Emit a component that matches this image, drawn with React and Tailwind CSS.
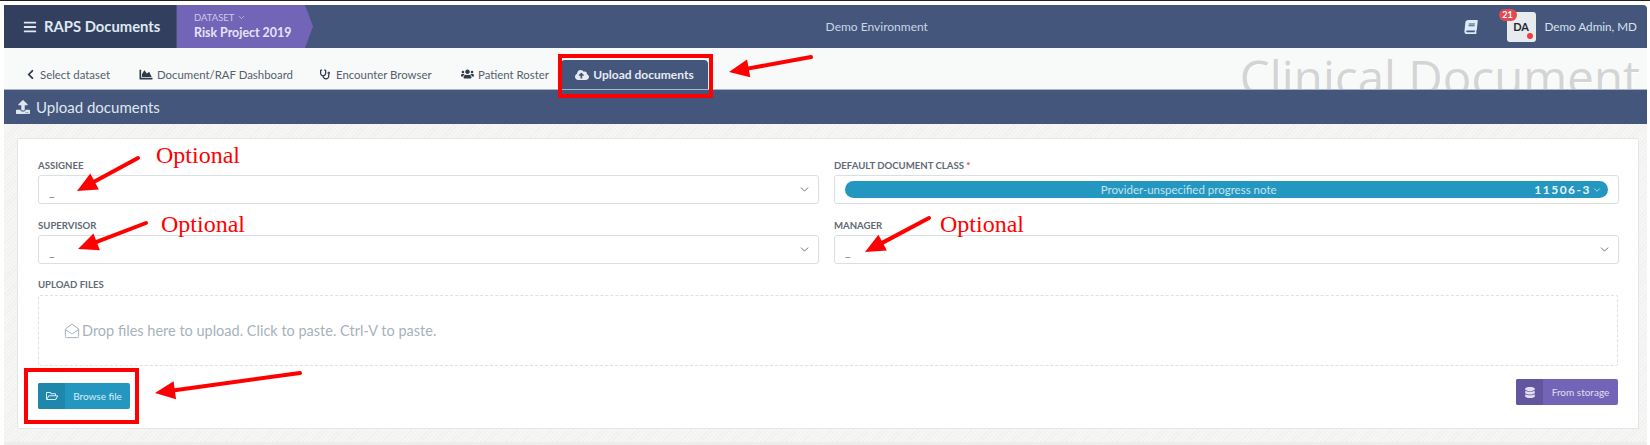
import React from 'react'
import { FaBars, FaChevronLeft, FaChartArea, FaStethoscope, FaUsers, FaCloudUploadAlt, FaBook, FaDatabase, FaRegFolderOpen, FaUpload } from 'react-icons/fa'
import { ChevronDown, MailOpen } from 'lucide-react'

const sans = "font-['Lato','Noto_Sans',sans-serif]"

function NavItem({ icon, label, className }) {
    return (
        <div className={`flex items-center gap-[4px] text-[11.4px] text-[#555f6d] ${className}`}>
            {icon}
            <span>{label}</span>
        </div>
    )
}

function Field({ label, required, children, className }) {
    return (
        <div className={`flex flex-col ${className}`}>
            <div className="h-[16px] text-[9.6px] leading-[18px] font-bold text-[#5f6b76]">
                {label}{required && <span className="text-[#e5484d]"> *</span>}
            </div>
            {children}
        </div>
    )
}

function SelectBox({ children }) {
    return (
        <div className="h-[29px] mt-[2px] flex items-center pl-[10px] pr-[7px] bg-white border border-[#d9dfe2] rounded-[3px]">
            {children ? children : <span className="flex-1 pt-[4px] text-[12px] text-[#6b7580]">_</span>}
            {!children && <ChevronDown className="w-[13px] h-[13px] text-[#5f6b76]" strokeWidth={1.75} />}
        </div>
    )
}

function Arrow({ x1, y1, x2, y2 }) {
    const angle = Math.atan2(y2 - y1, x2 - x1)
    const len = 20
    const wing = 9
    const bx = x2 - Math.cos(angle) * len
    const by = y2 - Math.sin(angle) * len
    const nx = -Math.sin(angle) * wing
    const ny = Math.cos(angle) * wing
    return (
        <g>
            <line x1={x1} y1={y1} x2={bx} y2={by} stroke="#ff0000" strokeWidth="4" strokeLinecap="round" />
            <polygon points={`${x2},${y2} ${bx + nx},${by + ny} ${bx - nx},${by - ny}`} fill="#ff0000" />
        </g>
    )
}

function Optional({ className }) {
    return <div className={`absolute font-['Liberation_Serif',serif] text-[24px] leading-[28px] text-[#ff0000] ${className}`}>Optional</div>
}

export default function App() {
    return (
        <div className={`relative w-[1650px] h-[445px] overflow-hidden bg-white ${sans}`}>
            <div className="h-[1px] bg-[#222222]" />
            <div className="pt-[4px] pl-[4px] pr-[3px]">
                {/* Header */}
                <div className="h-[43px] flex items-center bg-[#45567c] rounded-tr-[4px]">
                    <div className="w-[172px] h-full flex items-center pl-[19px] gap-[7px] bg-[#323f5e] text-[#dfe8f0]">
                        <FaBars className="w-[14px] h-[14px]" />
                        <span className="text-[14.8px] font-bold">RAPS Documents</span>
                    </div>
                    <div className="w-[136px] h-full ml-[1px] pl-[17px] flex flex-col justify-center bg-[#7265b8] [clip-path:polygon(0_0,128px_0,136px_50%,128px_100%,0_100%)]">
                        <div className="flex items-center gap-[3px] text-[9.5px] leading-[12px] text-[#cfc9ea]">
                            DATASET <ChevronDown className="w-[9px] h-[9px]" />
                        </div>
                        <div className="text-[12.4px] leading-[18px] font-bold text-[#e6e3f5]">Risk Project 2019</div>
                    </div>
                    <div className="flex-1 text-center pr-[23px] text-[12px] text-[#c8d6e5]">Demo Environment</div>
                    <FaBook className="w-[14px] h-[14px] mr-[29px] text-[#dcebf7] -skew-x-6" />
                    <div className="relative w-[29px] h-[30px] mt-[1px] mr-[9px] flex items-center justify-center rounded-[3px] bg-[#e8ebee] text-[11px] font-bold text-[#1f2933]">
                        DA
                        <span className="absolute -top-[3px] -left-[8px] w-[18px] h-[12px] rounded-full bg-[#e5484d] text-center text-[9px] leading-[12px] text-white">21</span>
                        <span className="absolute right-[3px] bottom-[3px] w-[6px] h-[6px] rounded-full bg-[#f03e3e]" />
                    </div>
                    <div className="mr-[10px] text-[11.7px] text-[#d5e2ef]">Demo Admin, MD</div>
                </div>

                {/* Tabs */}
                <div className="relative h-[42px] flex items-end overflow-hidden bg-[#f8f9f9] border-b border-[#aab4c4]">
                    <div className="absolute right-[7px] top-[0px] font-['Open_Sans',sans-serif] text-[47.5px] leading-[58px] font-normal text-[#d4d4d4] whitespace-nowrap [text-shadow:1px_1px_0_#ffffff]">Clinical Document</div>
                    <div className="relative h-[29px] flex items-center pl-[22px]">
                        <NavItem className="w-[113px] gap-[5px]" icon={<FaChevronLeft className="w-[9px] h-[11px] text-[#2f3a4a]" />} label="Select dataset" />
                        <NavItem className="w-[181px]" icon={<FaChartArea className="w-[14px] h-[13px] text-[#2f3a4a]" />} label="Document/RAF Dashboard" />
                        <NavItem className="w-[141px] gap-[6px]" icon={<FaStethoscope className="w-[10px] h-[11px] text-[#2f3a4a]" />} label="Encounter Browser" />
                        <NavItem className="w-[100px]" icon={<FaUsers className="w-[13px] h-[14px] text-[#2f3a4a]" />} label="Patient Roster" />
                    </div>
                    <div className="relative h-[29px] w-[147px] flex items-center justify-center gap-[4px] rounded-t-[4px] bg-[#45567c] text-[12px] font-bold text-[#e6ebf2]">
                        <FaCloudUploadAlt className="w-[14px] h-[14px]" />
                        <span>Upload documents</span>
                    </div>
                </div>

                {/* Section title */}
                <div className="h-[34px] flex items-center gap-[6px] pl-[12px] bg-[#45567c] text-[#dfe6ee]">
                    <FaUpload className="w-[14px] h-[14px]" />
                    <span className="text-[15px]">Upload documents</span>
                </div>

                {/* Body */}
                <div className="h-[318px] pt-[14px] pl-[13px] pr-[8px] bg-[#f3f3f1] bg-[repeating-linear-gradient(135deg,#f0f0ee_0,#f0f0ee_1px,#f6f6f4_1px,#f6f6f4_3px)]">
                    <div className="h-[291px] pt-[18px] px-[20px] bg-white border border-[#e4e7e8] rounded-[2px]">
                        <div className="grid grid-cols-[781px_785px] gap-x-[15px] gap-y-[13px]">
                            <Field label="ASSIGNEE"><SelectBox /></Field>
                            <Field label="DEFAULT DOCUMENT CLASS" required>
                                <SelectBox>
                                    <div className="flex-1 mr-[3px] h-[17px] flex items-center pl-[12px] pr-[6px] rounded-full bg-[#2497c0] text-[#c5e4ef]">
                                        <span className="flex-1 text-center pr-[14px] text-[11.5px]">Provider-unspecified progress note</span>
                                        <span className="font-bold text-[12px] tracking-[1.5px] text-[#e6f4f9]">11506-3</span>
                                        <ChevronDown className="w-[10px] h-[10px] ml-[1px]" />
                                    </div>
                                </SelectBox>
                            </Field>
                            <Field label="SUPERVISOR"><SelectBox /></Field>
                            <Field label="MANAGER"><SelectBox /></Field>
                        </div>

                        <div className="mt-[13px] h-[16px] text-[9.6px] leading-[16px] font-bold text-[#5f6b76]">UPLOAD FILES</div>
                        <div className="h-[71px] mt-[2px] flex items-center gap-[2px] pl-[25px] border border-dashed border-[#dde1e4] rounded-[2px] text-[14.5px] text-[#a7b2bc]">
                            <MailOpen className="w-[16px] h-[16px]" strokeWidth={1.5} />
                            <span>Drop files here to upload. Click to paste. Ctrl-V to paste.</span>
                        </div>

                        <div className="mt-[13px] flex items-start justify-between">
                            <div className="mt-[4px] w-[92px] h-[26px] flex rounded-[2px] overflow-hidden bg-[#2497c0] text-[10px] text-[#d7eef6]">
                                <div className="w-[27px] flex items-center justify-center bg-[#1f87ac]">
                                    <FaRegFolderOpen className="w-[12px] h-[12px]" />
                                </div>
                                <div className="flex-1 flex items-center justify-center">Browse file</div>
                            </div>
                            <div className="w-[102px] h-[26px] flex rounded-[2px] overflow-hidden bg-[#7265b8] text-[10px] text-[#e2def3]">
                                <div className="w-[27px] flex items-center justify-center bg-[#63569f]">
                                    <FaDatabase className="w-[10px] h-[11px]" />
                                </div>
                                <div className="flex-1 flex items-center justify-center">From storage</div>
                            </div>
                        </div>
                    </div>
                </div>
                <div className="h-[3px] bg-[#eceeee]" />
            </div>

            {/* Annotations drawn on top of the screenshot */}
            <div className="absolute left-[558px] top-[54px] w-[155px] h-[44px] border-[4px] border-[#ff0000]" />
            <div className="absolute left-[24px] top-[368px] w-[115px] h-[56px] border-[4px] border-[#ff0000]" />
            <svg className="absolute left-0 top-0 w-[1650px] h-[445px] pointer-events-none" viewBox="0 0 1650 445">
                <Arrow x1={811} y1={57} x2={729} y2={72} />
                <Arrow x1={138} y1={158} x2={77} y2={191} />
                <Arrow x1={146} y1={223} x2={78} y2={249} />
                <Arrow x1={929} y1={218} x2={865} y2={252} />
                <Arrow x1={300} y1={373} x2={155} y2={393} />
            </svg>
            <Optional className="left-[156px] top-[141px]" />
            <Optional className="left-[161px] top-[210px]" />
            <Optional className="left-[940px] top-[210px]" />
        </div>
    )
}
